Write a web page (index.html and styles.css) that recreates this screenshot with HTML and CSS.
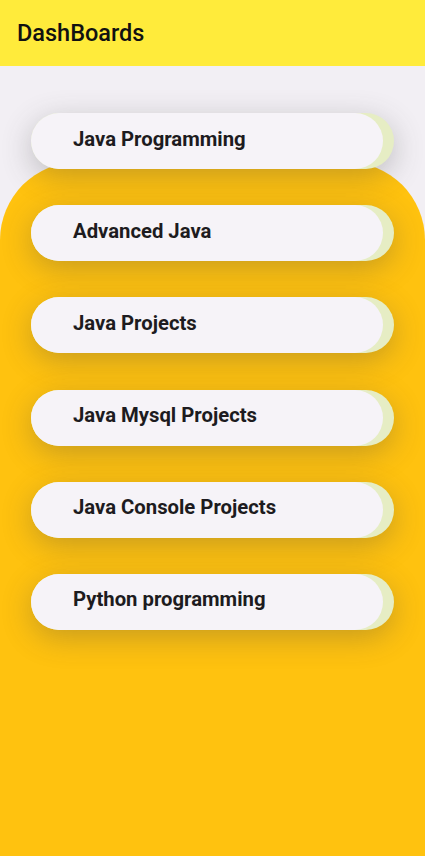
FILE: index.html
```html
<!DOCTYPE html>
<html>
<head>
<meta charset="utf-8">
<link rel="stylesheet" href="styles.css">
</head>
<body>
<header class="appbar"><h1 class="title">DashBoards</h1></header>
<main class="content">
  <ul class="list">
    <li class="item"><span class="card">Java Programming</span></li>
    <li class="item"><span class="card">Advanced Java</span></li>
    <li class="item"><span class="card">Java Projects</span></li>
    <li class="item"><span class="card">Java Mysql Projects</span></li>
    <li class="item"><span class="card">Java Console Projects</span></li>
    <li class="item"><span class="card">Python programming</span></li>
  </ul>
</main>
</body>
</html>
```
FILE: styles.css
```css
html, body { margin: 0; padding: 0; }
body {
  width: 425px;
  height: 856px;
  overflow: hidden;
  background: #f2eff4;
  font-family: Roboto, "Noto Sans", sans-serif;
}
.appbar {
  height: 66px;
  background: #ffeb3b;
  display: flex;
  align-items: center;
  padding-left: 17px;
  box-sizing: border-box;
}
.title {
  margin: 0;
  font-size: 23.5px;
  font-weight: 500;
  color: #111;
  padding-bottom: 1px;
}
.content {
  position: relative;
  height: 790px;
  padding-top: 47px;
  box-sizing: border-box;
}
.content::before {
  content: "";
  position: absolute;
  left: 0; right: 0; top: 96px; bottom: 0;
  background: #ffc20f;
  border-radius: 78px 78px 0 0;
}
.list {
  position: relative;
  list-style: none;
  margin: 0;
  padding: 0 31px 0 31px;
  display: flex;
  flex-direction: column;
  gap: 36.2px;
}
.item {
  height: 56px;
  border-radius: 28px;
  background: #e6edc4;
  display: flex;
  box-shadow: 0 8px 30px rgba(70, 70, 70, 0.3);
}
.card {
  flex: 0 0 auto;
  width: 352px;
  height: 56px;
  border-radius: 28px;
  background: #f6f3f8;
  display: flex;
  align-items: center;
  box-sizing: border-box;
  padding: 0 0 5px 42px;
  font-size: 20.3px;
  font-weight: 700;
  color: #1d1b20;
}
```
